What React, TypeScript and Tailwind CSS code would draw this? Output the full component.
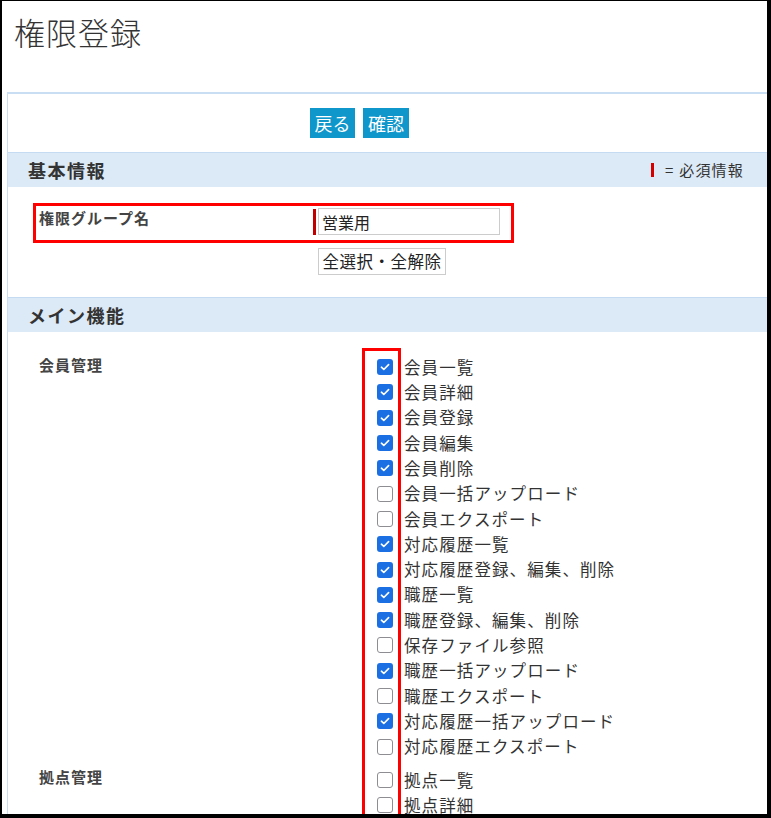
import React from "react";

type Perm = { label: string; checked: boolean };

const memberPerms: Perm[] = [
	{ label: "会員一覧", checked: true },
	{ label: "会員詳細", checked: true },
	{ label: "会員登録", checked: true },
	{ label: "会員編集", checked: true },
	{ label: "会員削除", checked: true },
	{ label: "会員一括アップロード", checked: false },
	{ label: "会員エクスポート", checked: false },
	{ label: "対応履歴一覧", checked: true },
	{ label: "対応履歴登録、編集、削除", checked: true },
	{ label: "職歴一覧", checked: true },
	{ label: "職歴登録、編集、削除", checked: true },
	{ label: "保存ファイル参照", checked: false },
	{ label: "職歴一括アップロード", checked: true },
	{ label: "職歴エクスポート", checked: false },
	{ label: "対応履歴一括アップロード", checked: true },
	{ label: "対応履歴エクスポート", checked: false },
];

const basePerms: Perm[] = [
	{ label: "拠点一覧", checked: false },
	{ label: "拠点詳細", checked: false },
];

const CheckBox = ({ checked }: { checked: boolean }) =>
	checked ? (
		<span className="flex h-4 w-4 shrink-0 items-center justify-center rounded-[3px] bg-[#1b6fe2]">
			<svg viewBox="0 0 16 16" className="h-3 w-3">
				<path
					d="M3.2 8.3 6.4 11.3 12.8 4.8"
					fill="none"
					stroke="#fff"
					strokeWidth="2.2"
					strokeLinecap="round"
					strokeLinejoin="round"
				/>
			</svg>
		</span>
	) : (
		<span className="h-4 w-4 shrink-0 rounded-[3px] border-[1.5px] border-[#8d8d92] bg-white"></span>
	);

const PermGroup = ({
	title,
	items,
	className = "",
}: {
	title: string;
	items: Perm[];
	className?: string;
}) => (
	<div className={`flex pl-[31px] ${className}`}>
		<div className="w-[338px] shrink-0 text-[15px] font-bold leading-[20px] tracking-[1px] text-[#444]">
			{title}
		</div>
		<ul>
			{items.map((item) => (
				<li
					key={item.label}
					className="flex h-[25.3px] items-center text-[16.5px] tracking-[1.1px] text-[#333]">
					<CheckBox checked={item.checked} />
					<span className="ml-[11px] whitespace-nowrap">{item.label}</span>
				</li>
			))}
		</ul>
	</div>
);

const SectionBand = ({
	title,
	children,
}: {
	title: string;
	children?: React.ReactNode;
}) => (
	<div className="flex h-[35px] items-center justify-between border-t border-[#c5dbf1] bg-[#dce9f6] pl-[20px] pr-[23px]">
		<span className="text-[18px] font-bold tracking-[1.5px] text-[#333]">{title}</span>
		{children}
	</div>
);

export default function App() {
	return (
		<div className="h-[818px] overflow-hidden border-b-4 border-l-2 border-r-4 border-t border-black bg-white font-['Noto_Sans_CJK_JP','Noto_Sans',sans-serif] text-[#333]">
			<h1 className="mb-[42px] pl-3 pt-[13px] text-[31px] font-light leading-[36px] tracking-[1px] text-[#333]">
				権限登録
			</h1>

			<div className="ml-[5px] border-l border-t-2 border-[#c9def3]">
				{/* action buttons */}
				<div className="flex gap-2 pl-[302px] pt-[14px]">
					<button className="h-[30px] w-[45px] bg-[#0f96cb] text-[18px] leading-none text-white">
						戻る
					</button>
					<button className="h-[30px] w-[46px] bg-[#0f96cb] text-[18px] leading-none text-white">
						確認
					</button>
				</div>

				<div className="mt-[14px]">
					<SectionBand title="基本情報">
						<span className="flex items-center text-[15px] tracking-[1.2px] text-[#333]">
							<span className="mr-[11px] h-[14px] w-[3px] bg-[#d40000]"></span>= 必須情報
						</span>
					</SectionBand>
				</div>

				{/* group name */}
				<div className="ml-[25px] mt-[16px] flex h-[40px] w-[481px] items-start border-[3px] border-[#f00] pl-[3px] pt-[2px]">
					<span className="w-[274px] shrink-0 text-[15px] font-bold leading-[20px] tracking-[1px] text-[#444]">
						権限グループ名
					</span>
					<span className="mt-[1px] h-[26px] w-[3px] bg-[#c00000]"></span>
					<input
						defaultValue="営業用"
						className="ml-[2px] h-[27px] w-[182px] border border-[#ccc] px-[3px] text-[16px] text-[#222] outline-none"
					/>
				</div>

				<button className="ml-[310px] mt-[5px] h-[27px] w-[128px] border border-[#ccc] bg-white text-[16.5px] leading-none tracking-[0.5px] text-[#222]">
					全選択・全解除
				</button>

				<div className="mt-[22px]">
					<SectionBand title="メイン機能" />
				</div>

				<div className="relative pt-[22.5px]">
					<PermGroup title="会員管理" items={memberPerms} />
					<PermGroup title="拠点管理" items={basePerms} className="mt-[8px]" />
					{/* highlight around the checkbox column */}
					<div className="absolute left-[354px] top-[16px] h-[600px] w-[39px] border-[3px] border-[#f00]"></div>
				</div>
			</div>
		</div>
	);
}
